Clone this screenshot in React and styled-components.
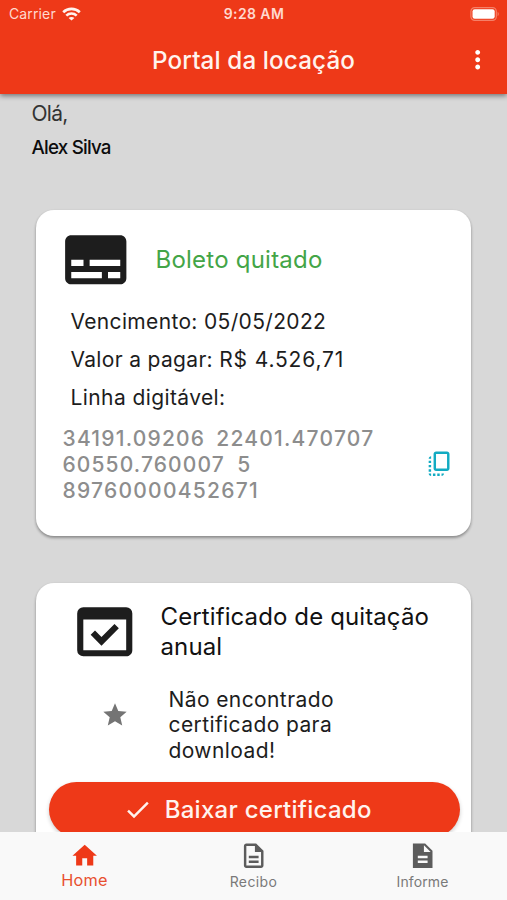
import React from 'react';
import styled, { createGlobalStyle } from 'styled-components';
import {
  MdCheck,
  MdCopyAll,
  MdDomainVerification,
  MdHome,
  MdMoreVert,
  MdOutlineDescription,
  MdStar,
  MdSubtitles,
} from 'react-icons/md';

const GlobalStyle = createGlobalStyle`
  * {
    box-sizing: border-box;
  }

  body {
    margin: 0;
    font-family: Inter, Roboto, sans-serif;
    color: #1d1d1d;
  }

  svg {
    display: block;
    flex-shrink: 0;
  }
`;

const Screen = styled.div`
  display: flex;
  flex-direction: column;
  height: 100vh;
  overflow: hidden;
  background-color: #d8d8d8;
`;

const Header = styled.header`
  flex: none;
  height: 93.5px;
  z-index: 1;
  background-color: #ee3918;
  color: #fff3ee;
  box-shadow: 0 2px 5px rgba(0, 0, 0, 0.45);
`;

const StatusBar = styled.div`
  display: grid;
  grid-template-columns: 1fr auto 1fr;
  align-items: center;
  height: 27px;
  padding: 0 7px 0 9px;
  font-size: 14px;
  color: #ffd9cf;
`;

const Carrier = styled.div`
  display: flex;
  align-items: center;
  gap: 6px;
  letter-spacing: 0.13px;
`;

const Clock = styled.div`
  margin-left: -1px;
  font-weight: 600;
  letter-spacing: 0.4px;
`;

const BatterySlot = styled.div`
  display: flex;
  justify-content: flex-end;
`;

const AppBar = styled.div`
  display: grid;
  grid-template-columns: 58px 1fr 58px;
  align-items: center;
  height: 66px;
`;

const AppTitle = styled.h1`
  grid-column: 2;
  margin: 0;
  padding-top: 1px;
  font-size: 24.2px;
  font-weight: 500;
  line-height: 30px;
  letter-spacing: 0.14px;
  text-align: center;
`;

const MenuButton = styled.button`
  display: flex;
  justify-content: center;
  padding: 0;
  border: none;
  background: none;
  color: #fff;
  cursor: pointer;
`;

const Content = styled.main`
  flex: 1;
  min-height: 0;
  padding: 7.5px 36px 0;
  overflow: hidden;
`;

const Greeting = styled.div`
  height: 109px;
  margin-left: -4.5px;
`;

const Hello = styled.div`
  font-size: 21px;
  line-height: 26px;
  letter-spacing: -0.7px;
  color: #333;
`;

const UserName = styled.div`
  margin-top: 8px;
  font-size: 18.8px;
  font-weight: 500;
  line-height: 26px;
  letter-spacing: -0.8px;
  color: #0c0c0c;
`;

const Card = styled.section`
  height: ${({ $height }) => $height}px;
  margin-bottom: 47px;
  padding: ${({ $padding }) => $padding};
  border-radius: 18px;
  background-color: #fff;
  box-shadow: 0 2px 3px rgba(0, 0, 0, 0.3), 0 1px 3px rgba(0, 0, 0, 0.1);
`;

const CardHeader = styled.div`
  display: flex;
  align-items: center;
  gap: ${({ $gap }) => $gap}px;
  height: 73.5px;
`;

const CardTitle = styled.h2`
  margin: 0;
  font-size: 24px;
  font-weight: 400;
  line-height: 29.3px;
  letter-spacing: ${({ $spacing }) => $spacing}px;
  color: ${({ $color }) => $color || '#111'};
`;

const Details = styled.div`
  margin: 6.6px 0 9.5px 11.5px;
  font-size: 21px;
  line-height: 37.9px;
`;

const Detail = styled.div`
  letter-spacing: ${({ $spacing }) => $spacing}px;
`;

const Amount = styled.span`
  letter-spacing: 0.85px;
`;

const BarcodeRow = styled.div`
  display: flex;
  align-items: center;
  justify-content: space-between;
  margin-left: 3.5px;
  color: #12abc2;
`;

const Barcode = styled.div`
  font-size: 21px;
  font-weight: 500;
  line-height: 25.7px;
  white-space: pre;
  color: #8d8d8d;
`;

const BarcodeLine = styled.div`
  letter-spacing: ${({ $spacing }) => $spacing}px;
  word-spacing: ${({ $wordSpacing }) => $wordSpacing || 0}px;
`;

const CopyIcon = styled(MdCopyAll)`
  margin-bottom: 2px;
`;

const CertificateIcon = styled(MdDomainVerification)`
  margin-left: 19.5px;
`;

const MessageRow = styled.div`
  display: flex;
  align-items: flex-start;
  margin: 18px 0 18.5px 51.5px;
`;

const StarSlot = styled.div`
  width: 68.5px;
  padding: 14.5px 0 0 0.5px;
  color: #747474;
`;

const Message = styled.div`
  width: 190px;
  font-size: 21px;
  line-height: 25.7px;
  letter-spacing: 0.4px;
`;

const DownloadButton = styled.button`
  display: flex;
  align-items: center;
  justify-content: center;
  gap: 12px;
  width: 100%;
  height: 55px;
  padding: 0 13px 0 0;
  border: none;
  border-radius: 28px;
  background-color: #ee3918;
  color: #fff3ee;
  font-family: inherit;
  font-size: 24px;
  font-weight: 500;
  letter-spacing: 0.27px;
  box-shadow: 0 2px 4px rgba(0, 0, 0, 0.2);
  cursor: pointer;
`;

const BottomNav = styled.nav`
  display: grid;
  grid-template-columns: repeat(3, 1fr);
  flex: none;
  height: 68.5px;
  padding-top: 9.5px;
  background-color: #f9f9f9;
  z-index: 1;
`;

const NavItem = styled.a`
  display: flex;
  flex-direction: column;
  align-items: center;
  color: ${({ $active }) => ($active ? '#ee3918' : '#5c5c5c')};
`;

const NavLabel = styled.span`
  margin-top: ${({ $active }) => ($active ? 0 : 1.5)}px;
  font-size: ${({ $active }) => ($active ? 16.3 : 14)}px;
  line-height: 20px;
  letter-spacing: ${({ $spacing }) => $spacing}px;
  color: ${({ $active }) => ($active ? '#e8502f' : '#7a7a7a')};
`;

const WifiIcon = () => (
  <svg width="19" height="14" viewBox="0 0 19 14" fill="none" stroke="#fff3ee" strokeWidth="2.6">
    <path d="M1.2 5.2C5.8 0.7 13.2 0.7 17.8 5.2" />
    <path d="M4.3 8.6C7.2 5.8 11.8 5.8 14.7 8.6" />
    <path d="M9.5 13.6L6.6 10.9C8.2 9.6 10.8 9.6 12.4 10.9Z" fill="#fff3ee" stroke="none" />
  </svg>
);

const BatteryIcon = () => (
  <svg width="30" height="14" viewBox="0 0 30 14">
    <rect x="0.9" y="0.6" width="25.4" height="12.8" rx="3.8" fill="none" stroke="#f58068" strokeWidth="1.2" />
    <rect x="2.5" y="2.3" width="22.2" height="9.4" rx="2.2" fill="#fff" />
    <path d="M27.6 4.8c1.6.7 1.6 3.7 0 4.4z" fill="#f58068" />
  </svg>
);

// filled page with square outer corners, react-icons has no sharp variant
const SharpDescriptionIcon = ({ size }) => (
  <svg width={size} height={size} viewBox="0 0 24 24" fill="currentColor">
    <path d="M14 2H4v20h16V8l-6-6zm2 16H8v-2h8v2zm0-4H8v-2h8v2zm-3-5V3.5L18.5 9H13z" />
  </svg>
);

const ICON_SIZE = 29.4;
const LARGE_ICON_SIZE = 73.5;

const navItems = [
  { label: 'Home', icon: MdHome, active: true, spacing: 0.2 },
  { label: 'Recibo', icon: MdOutlineDescription, spacing: 0.4 },
  { label: 'Informe', icon: SharpDescriptionIcon, spacing: 0.1 },
];

const barcodeLines = [
  { text: '34191.09206  22401.470707', spacing: 1.22, wordSpacing: -1.3 },
  { text: '60550.760007  5', spacing: 1.12, wordSpacing: -0.5 },
  { text: '89760000452671', spacing: 1.26 },
];

const App = () => {
  return (
    <Screen>
      <GlobalStyle />
      <Header>
        <StatusBar>
          <Carrier>
            Carrier
            <WifiIcon />
          </Carrier>
          <Clock>9:28 AM</Clock>
          <BatterySlot>
            <BatteryIcon />
          </BatterySlot>
        </StatusBar>
        <AppBar>
          <AppTitle>Portal da locação</AppTitle>
          <MenuButton aria-label="Menu">
            <MdMoreVert size={ICON_SIZE} />
          </MenuButton>
        </AppBar>
      </Header>

      <Content>
        <Greeting>
          <Hello>Olá,</Hello>
          <UserName>Alex Silva</UserName>
        </Greeting>

        <Card $height={326} $padding="13px 17px 0 23px">
          <CardHeader $gap={23}>
            <MdSubtitles size={LARGE_ICON_SIZE} />
            <CardTitle $color="#43a547" $spacing={0.23}>Boleto quitado</CardTitle>
          </CardHeader>
          <Details>
            <Detail $spacing={0.34}>Vencimento: 05/05/2022</Detail>
            <Detail $spacing={0.33}>
              Valor a pagar: <Amount>R$ 4.526,71</Amount>
            </Detail>
            <Detail $spacing={0.4}>Linha digitável:</Detail>
          </Details>
          <BarcodeRow>
            <Barcode>
              {barcodeLines.map(({ text, spacing, wordSpacing }) => (
                <BarcodeLine key={text} $spacing={spacing} $wordSpacing={wordSpacing}>{text}</BarcodeLine>
              ))}
            </Barcode>
            <CopyIcon size={ICON_SIZE} />
          </BarcodeRow>
        </Card>

        <Card $height={320} $padding="12px 11.5px 0 12.5px">
          <CardHeader $gap={19}>
            <CertificateIcon size={LARGE_ICON_SIZE} />
            <CardTitle $spacing={0.11}>Certificado de quitação anual</CardTitle>
          </CardHeader>
          <MessageRow>
            <StarSlot>
              <MdStar size={28} />
            </StarSlot>
            <Message>Não encontrado certificado para download!</Message>
          </MessageRow>
          <DownloadButton>
            <MdCheck size={ICON_SIZE} />
            Baixar certificado
          </DownloadButton>
        </Card>
      </Content>

      <BottomNav>
        {navItems.map(({ label, icon: Icon, active, spacing }) => (
          <NavItem key={label} $active={active}>
            <Icon size={ICON_SIZE} />
            <NavLabel $active={active} $spacing={spacing}>{label}</NavLabel>
          </NavItem>
        ))}
      </BottomNav>
    </Screen>
  );
};

export default App;
